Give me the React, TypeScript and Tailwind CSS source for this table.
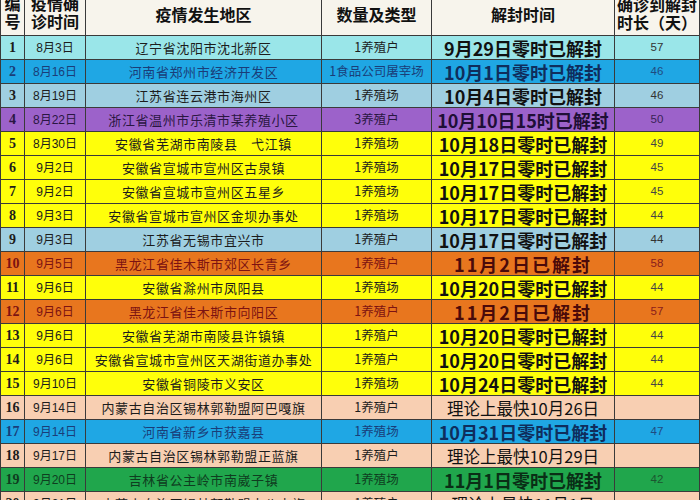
import React from "react";

type Theme = "cyan" | "blue" | "lblue" | "purple" | "yellow" | "orange" | "peach" | "green";

const themes: Record<Theme, { bg: string; text: string; days: string; main: string }> = {
  cyan: { bg: "bg-[#9ae6e9]", text: "text-[#1c1c1c]", days: "text-[#333333]", main: "text-[#111111]" },
  blue: { bg: "bg-[#1fa7e4]", text: "text-[#1a3d78]", days: "text-[#1f4a80]", main: "text-[#0f2d5c]" },
  lblue: { bg: "bg-[#9fcfe1]", text: "text-[#1c1c1c]", days: "text-[#333333]", main: "text-[#111111]" },
  purple: { bg: "bg-[#9c62ca]", text: "text-[#2a1642]", days: "text-[#3a2356]", main: "text-[#1f0f36]" },
  yellow: { bg: "bg-[#ffff0a]", text: "text-[#1c1c1c]", days: "text-[#444444]", main: "text-[#111111]" },
  orange: { bg: "bg-[#e8761e]", text: "text-[#7c1212]", days: "text-[#8a1c1c]", main: "text-[#4a0a0a]" },
  peach: { bg: "bg-[#f8cfb2]", text: "text-[#1c1c1c]", days: "text-[#333333]", main: "text-[#111111]" },
  green: { bg: "bg-[#20a64c]", text: "text-[#0f3d20]", days: "text-[#1c5530]", main: "text-[#0a2e16]" },
};

type Row = {
  n: string;
  date: string;
  place: string;
  qty: string;
  unlock: string;
  days: string;
  theme: Theme;
  kind?: "normal" | "short" | "theory";
};

const rows: Row[] = [
  { n: "1", date: "8月3日", place: "辽宁省沈阳市沈北新区", qty: "1养殖户", unlock: "9月29日零时已解封", days: "57", theme: "cyan" },
  { n: "2", date: "8月16日", place: "河南省郑州市经济开发区", qty: "1食品公司屠宰场", unlock: "10月1日零时已解封", days: "46", theme: "blue" },
  { n: "3", date: "8月19日", place: "江苏省连云港市海州区", qty: "1养殖场", unlock: "10月4日零时已解封", days: "46", theme: "lblue" },
  { n: "4", date: "8月22日", place: "浙江省温州市乐清市某养殖小区", qty: "3养殖户", unlock: "10月10日15时已解封", days: "50", theme: "purple" },
  { n: "5", date: "8月30日", place: "安徽省芜湖市南陵县\u3000弋江镇", qty: "1养殖场", unlock: "10月18日零时已解封", days: "49", theme: "yellow" },
  { n: "6", date: "9月2日", place: "安徽省宣城市宣州区古泉镇", qty: "1养殖场", unlock: "10月17日零时已解封", days: "45", theme: "yellow" },
  { n: "7", date: "9月2日", place: "安徽省宣城市宣州区五星乡", qty: "1养殖场", unlock: "10月17日零时已解封", days: "45", theme: "yellow" },
  { n: "8", date: "9月3日", place: "安徽省宣城市宣州区金坝办事处", qty: "1养殖场", unlock: "10月17日零时已解封", days: "44", theme: "yellow" },
  { n: "9", date: "9月3日", place: "江苏省无锡市宜兴市", qty: "1养殖户", unlock: "10月17日零时已解封", days: "44", theme: "lblue" },
  { n: "10", date: "9月5日", place: "黑龙江省佳木斯市郊区长青乡", qty: "1养殖户", unlock: "11月2日已解封", days: "58", theme: "orange", kind: "short" },
  { n: "11", date: "9月6日", place: "安徽省滁州市凤阳县", qty: "1养殖场", unlock: "10月20日零时已解封", days: "44", theme: "yellow" },
  { n: "12", date: "9月6日", place: "黑龙江省佳木斯市向阳区", qty: "1养殖户", unlock: "11月2日已解封", days: "57", theme: "orange", kind: "short" },
  { n: "13", date: "9月6日", place: "安徽省芜湖市南陵县许镇镇", qty: "1养殖户", unlock: "10月20日零时已解封", days: "44", theme: "yellow" },
  { n: "14", date: "9月6日", place: "安徽省宣城市宣州区天湖街道办事处", qty: "1养殖户", unlock: "10月20日零时已解封", days: "44", theme: "yellow" },
  { n: "15", date: "9月10日", place: "安徽省铜陵市义安区", qty: "1养殖场", unlock: "10月24日零时已解封", days: "44", theme: "yellow" },
  { n: "16", date: "9月14日", place: "内蒙古自治区锡林郭勒盟阿巴嘎旗", qty: "1养殖户", unlock: "理论上最快10月26日", days: "", theme: "peach", kind: "theory" },
  { n: "17", date: "9月14日", place: "河南省新乡市获嘉县", qty: "1养殖场", unlock: "10月31日零时已解封", days: "47", theme: "blue" },
  { n: "18", date: "9月17日", place: "内蒙古自治区锡林郭勒盟正蓝旗", qty: "1养殖户", unlock: "理论上最快10月29日", days: "", theme: "peach", kind: "theory" },
  { n: "19", date: "9月20日", place: "吉林省公主岭市南崴子镇", qty: "1养殖场", unlock: "11月1日零时已解封", days: "42", theme: "green" },
  { n: "20", date: "9月21日", place: "内蒙古自治区锡林郭勒盟太仆寺旗", qty: "1养殖户", unlock: "理论上最快11月1日", days: "", theme: "peach", kind: "theory" },
];

const cjk = { fontFamily: '"Noto Sans CJK SC", "Noto Sans", sans-serif' };
const dateFont = { fontFamily: '"Liberation Sans", "Noto Sans CJK SC", sans-serif' };
const numFont = { fontFamily: '"Liberation Serif", "Noto Sans CJK SC", serif' };

const cell = "border-r border-b border-[#3a3a3a] flex items-center justify-center overflow-hidden whitespace-nowrap";
const head = "h-[42px] bg-[#f7f4ec] text-[#111] font-bold text-[16px]";

export default function App() {
  return (
    <div className="w-[700px] h-[500px] overflow-hidden bg-white" style={cjk}>
      <div className="grid grid-cols-[25px_61px_236px_110px_183px_85px] -mt-[6px]">
        {/* header */}
        <div className={`${cell} ${head} border-l leading-[18px] flex-col pb-[5px]`}>
          <span>编</span>
          <span>号</span>
        </div>
        <div className={`${cell} ${head} leading-[18px] flex-col pb-[5px]`}>
          <span>疫情确</span>
          <span>诊时间</span>
        </div>
        <div className={`${cell} ${head} pb-[1px]`}>疫情发生地区</div>
        <div className={`${cell} ${head} pb-[1px]`}>数量及类型</div>
        <div className={`${cell} ${head} pb-[1px]`}>解封时间</div>
        <div className={`${cell} ${head} leading-[18px] flex-col items-start! pl-[2px] pb-[4px]`}>
          <span>确诊到解封</span>
          <span>时长（天）</span>
        </div>

        {rows.map((r) => {
          const t = themes[r.theme];
          const base = `${cell} h-[24px] ${t.bg}`;
          let unlockCls = "text-[18px] font-bold";
          if (r.kind === "short") unlockCls = "text-[18px] font-bold tracking-[2px]";
          if (r.kind === "theory") unlockCls = "text-[16.5px] font-normal";
          return (
            <React.Fragment key={r.n}>
              <div className={`${base} border-l font-bold text-[14px] ${t.text}`} style={numFont}>
                {r.n}
              </div>
              <div className={`${base} text-[12px] ${t.text}`} style={dateFont}>
                {r.date}
              </div>
              <div className={`${base} text-[13px] tracking-[0.6px] ${t.text}`}>{r.place}</div>
              <div className={`${base} text-[12.5px] ${t.text}`}>{r.qty}</div>
              <div className={`${base} ${unlockCls} ${t.main} leading-[20px]`}>{r.unlock}</div>
              <div className={`${base} text-[11.5px] ${t.days}`} style={dateFont}>
                {r.days}
              </div>
            </React.Fragment>
          );
        })}
      </div>
    </div>
  );
}
